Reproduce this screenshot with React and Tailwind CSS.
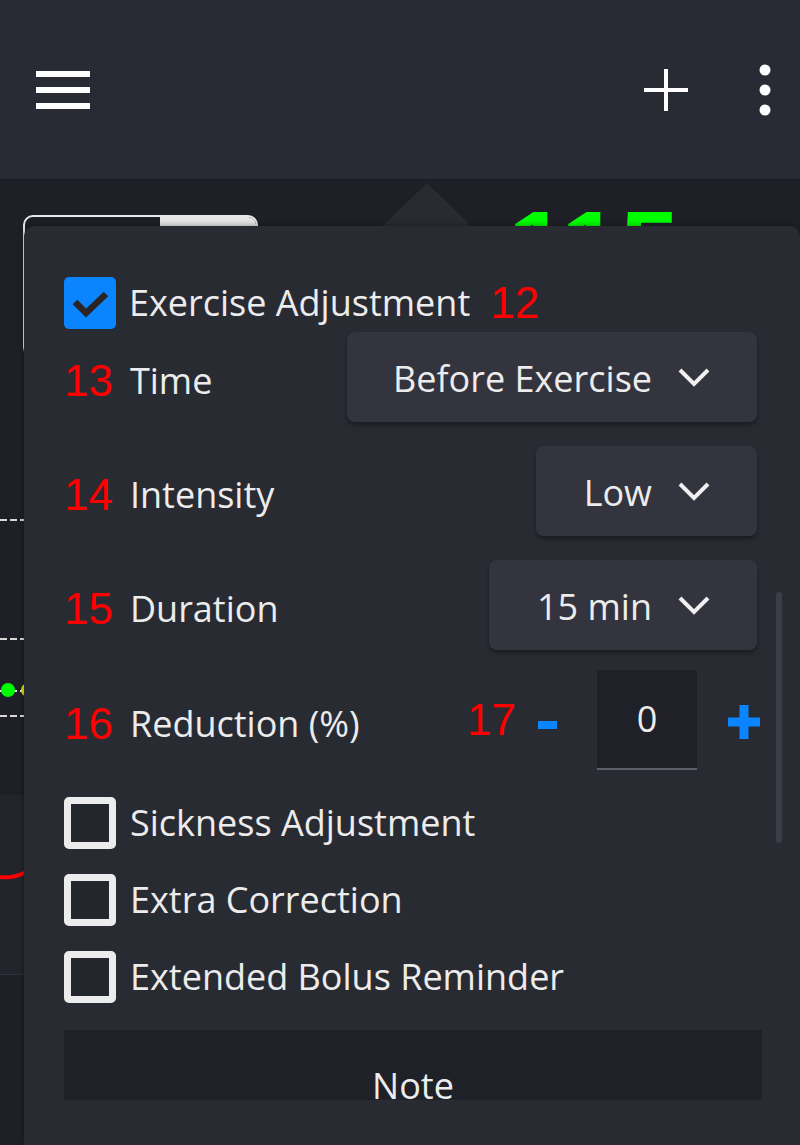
import React from 'react';

const FONT = { fontFamily: '"Open Sans", "Noto Sans", sans-serif' };

const Chevron = () => (
  <svg width="32" height="20" viewBox="0 0 32 20" className="shrink-0">
    <polyline points="2,3 16,17 30,3" fill="none" stroke="#f0f0f0" strokeWidth="4" strokeLinejoin="miter" />
  </svg>
);

const Select = ({ value, width }) => (
  <div
    className={`h-[90px] ${width} flex items-center justify-end gap-[26px] pr-[47px] rounded-lg bg-[#33343e] shadow-[0_3px_4px_rgba(0,0,0,0.35)] mr-[5px]`}
  >
    <span className="text-[36px] leading-none text-[#ececec] mt-[3px]">{value}</span>
    <Chevron />
  </div>
);

const Num = ({ children, className = '' }) => (
  <span
    className={`text-[44px] leading-none text-[#ff0000] ${className}`}
    style={{ fontFamily: '"Liberation Sans", Arial, sans-serif' }}
  >
    {children}
  </span>
);

const Label = ({ n, text }) => (
  <div className="flex items-center gap-[17px] mt-[7px]">
    <Num>{n}</Num>
    <span className="text-[36px] leading-none text-[#ececec]">{text}</span>
  </div>
);

const EmptyBox = ({ text }) => (
  <div className="flex items-center h-[52px] gap-[14px]">
    <div className="w-[52px] h-[52px] rounded-[5px] border-[7px] border-[#ececec] bg-[#24262d]" />
    <span className="text-[36px] leading-none text-[#ececec]">{text}</span>
  </div>
);

export default function App() {
  return (
    <div className="relative w-[800px] h-[1145px] overflow-hidden bg-[#1f2027]" style={FONT}>
      {/* top bar */}
      <header className="h-[180px] bg-[#292b34] flex items-center px-[36px] border-b border-[#1b1c22]">
        <svg width="54" height="38" viewBox="0 0 54 38">
          <rect x="0" y="0" width="54" height="6" fill="#fff" />
          <rect x="0" y="16" width="54" height="6" fill="#fff" />
          <rect x="0" y="32" width="54" height="6" fill="#fff" />
        </svg>
        <div className="ml-auto flex items-center gap-[71px] mr-[-7px]">
          <svg width="44" height="42" viewBox="0 0 44 42">
            <rect x="20" y="0" width="4" height="42" fill="#fff" />
            <rect x="0" y="19" width="44" height="4" fill="#fff" />
          </svg>
          <svg width="12" height="52" viewBox="0 0 12 52">
            <circle cx="6" cy="6" r="5.5" fill="#fff" />
            <circle cx="6" cy="26" r="5.5" fill="#fff" />
            <circle cx="6" cy="46" r="5.5" fill="#fff" />
          </svg>
        </div>
      </header>

      {/* page behind the popup */}
      <div className="flex flex-col">
        <div className="h-[290px] flex items-start pl-[23px] pt-[35px]">
          <div className="w-[235px] h-[142px] rounded-[10px] border-2 border-[#e8e8e8] flex overflow-hidden">
            <div className="w-[135px]" />
            <div className="flex-1 bg-[#e6e6e6]" />
          </div>
          <span
            className="ml-[250px] mt-[-20px] text-[106px] leading-none font-bold text-[#00ff00]"
            style={{ fontFamily: '"Liberation Sans", Arial, sans-serif' }}
          >
            115
          </span>
        </div>
        <svg width="800" height="325" viewBox="0 0 800 325">
          <line x1="0" y1="50" x2="800" y2="50" stroke="#d8d8d8" strokeWidth="2" strokeDasharray="7 3" />
          <line x1="0" y1="169" x2="800" y2="169" stroke="#d8d8d8" strokeWidth="2" strokeDasharray="7 3" />
          <line x1="0" y1="246" x2="800" y2="246" stroke="#d8d8d8" strokeWidth="2" strokeDasharray="7 3" />
          <line x1="0" y1="221" x2="800" y2="221" stroke="#e8e8e8" strokeWidth="2" strokeDasharray="7 3" />
          <circle cx="8" cy="220" r="7" fill="#00ff00" />
          <circle cx="28" cy="220" r="7" fill="#e6e600" />
        </svg>
        <div className="h-[180px] bg-[#24252c] border-b border-[#30313a]">
          <svg width="800" height="180" viewBox="0 0 800 180">
            <path d="M0 82 C 8 83, 16 82, 24 78 L 60 70" fill="none" stroke="#ff0000" strokeWidth="4" />
          </svg>
        </div>
      </div>

      {/* popup arrow */}
      <svg width="90" height="44" viewBox="0 0 90 44" className="absolute left-[382px] top-[183px]">
        <polygon points="45,0 90,44 0,44" fill="#292b33" />
      </svg>

      {/* popup */}
      <div className="absolute left-[24px] top-[226px] right-0 bottom-0 bg-[#292b33] rounded-t-[10px] shadow-[0_0_6px_rgba(0,0,0,0.4)]">
        <div className="h-[874px] overflow-hidden pl-[40px] pr-[38px] pt-[51px] flex flex-col">
          <div className="flex items-center h-[52px] gap-[13px]">
            <div className="w-[52px] h-[52px] rounded-[5px] bg-[#0a84ff] flex items-center justify-center">
              <svg width="52" height="52" viewBox="0 0 52 52">
                <polyline points="11,25 22,36 42,17" fill="none" stroke="#2a2424" strokeWidth="6.5" />
              </svg>
            </div>
            <span className="text-[36px] leading-none text-[#ececec]">Exercise Adjustment</span>
            <Num className="ml-[7px]">12</Num>
          </div>

          <div className="mt-[3px] flex items-center justify-between">
            <Label n="13" text="Time" />
            <Select value="Before Exercise" width="w-[410px]" />
          </div>
          <div className="mt-[24px] flex items-center justify-between">
            <Label n="14" text="Intensity" />
            <Select value="Low" width="w-[221px]" />
          </div>
          <div className="mt-[24px] flex items-center justify-between">
            <Label n="15" text="Duration" />
            <Select value="15 min" width="w-[268px]" />
          </div>

          <div className="mt-[20px] h-[100px] flex items-center">
            <Label n="16" text="Reduction (%)" />
            <div className="ml-auto mr-[2px] flex items-center">
              <Num>17</Num>
              <svg width="19" height="10" viewBox="0 0 19 10" className="ml-[22px] mt-[12px]">
                <rect x="0" y="0" width="19" height="8" fill="#0a84ff" />
              </svg>
              <div className="ml-[40px] w-[100px] h-[100px] bg-[#1f2028] border-b-2 border-[#5c5e68] flex items-center justify-center">
                <span className="text-[36px] leading-none text-[#ececec]">0</span>
              </div>
              <svg width="32" height="34" viewBox="0 0 32 34" className="ml-[31px] mt-[4px]">
                <rect x="11.5" y="0" width="9" height="34" fill="#0a84ff" />
                <rect x="0" y="12.5" width="32" height="9" fill="#0a84ff" />
              </svg>
            </div>
          </div>

          <div className="mt-[27px] flex flex-col gap-[25px]">
            <EmptyBox text="Sickness Adjustment" />
            <EmptyBox text="Extra Correction" />
            <EmptyBox text="Extended Bolus Reminder" />
          </div>

          <div className="mt-[27px] h-[112px] shrink-0 bg-[#1f2128] flex items-center justify-center">
            <span className="text-[36px] leading-none text-[#ececec]">Note</span>
          </div>
        </div>

        {/* scrollbar */}
        <div className="absolute left-[752px] top-[366px] w-[6px] h-[251px] rounded-full bg-[#3b3d47]" />
      </div>
    </div>
  );
}
